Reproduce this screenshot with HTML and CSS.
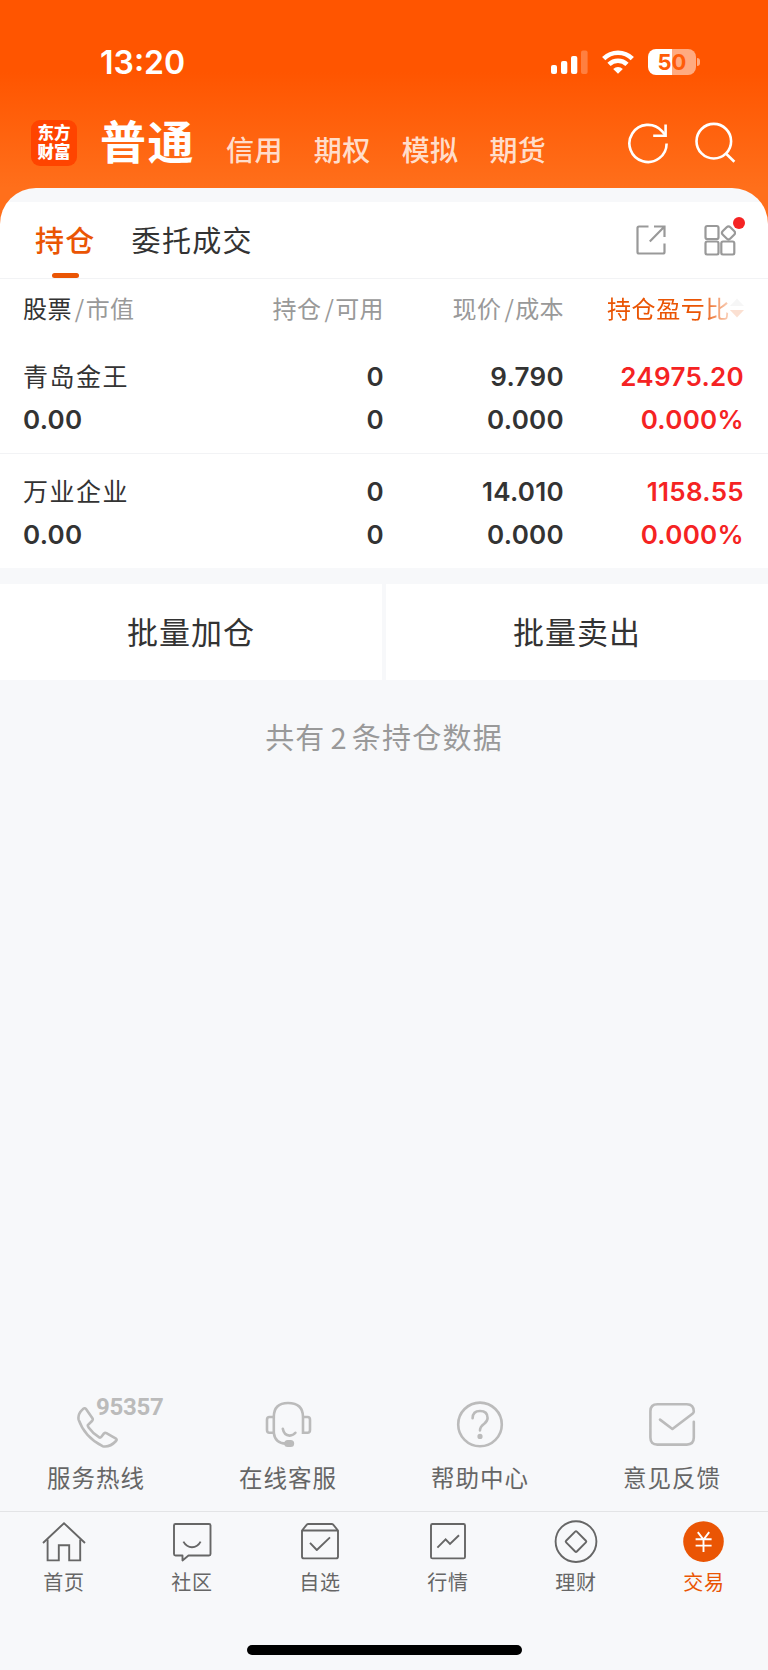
FILE: index.html
```
<!DOCTYPE html>
<html lang="zh-CN">

<head>
    <meta charset="UTF-8">
    <meta name="viewport" content="width=device-width, initial-scale=1.0">
    <title>普通交易 - 持仓</title>
    <link rel="stylesheet" href="styles.css">
</head>

<body>
    <header class="header">
        <div class="status-bar">
            <span class="clock">13:20</span>
            <div class="status-icons">
                <svg class="signal" width="37" height="24" viewBox="0 0 37 24" fill="#fff">
                    <rect x="0" y="15" width="6" height="9" rx="2" />
                    <rect x="10" y="11" width="6.3" height="13" rx="2" />
                    <rect x="20" y="6" width="6.3" height="18" rx="2" />
                    <rect x="30" y="0.5" width="6.6" height="23.5" rx="2" opacity="0.25" />
                </svg>
                <svg class="wifi" width="32" height="24" viewBox="0 0 32 24" fill="none" stroke="#fff" stroke-width="4.6">
                    <path d="M1.7 8.6 A20.3 20.3 0 0 1 30.3 8.6" />
                    <path d="M7 14.4 A12.8 12.8 0 0 1 25 14.4" />
                    <path d="M16 23.8 L11.2 18.9 A7 7 0 0 1 20.8 18.9 Z" fill="#fff" stroke="none" />
                </svg>
                <div class="battery"><span>50</span></div>
            </div>
        </div>
        <nav class="account-nav">
            <div class="logo"><span>东方</span><span>财富</span></div>
            <span class="account active">普通</span>
            <span class="account">信用</span>
            <span class="account">期权</span>
            <span class="account">模拟</span>
            <span class="account">期货</span>
            <svg class="refresh" width="42" height="42" viewBox="0 0 42 42" fill="none" stroke="#fff" stroke-width="2.6">
                <path d="M39.6 21.4 A18.6 18.6 0 1 1 35 9.2 L38.3 13" />
                <path d="M38.6 2.4 V13.8 H26.2" />
            </svg>
            <svg class="search" width="42" height="42" viewBox="0 0 42 42" fill="none" stroke="#fff" stroke-width="2.6">
                <circle cx="19.8" cy="19.2" r="17.3" />
                <path d="M31.6 31.2 L40.4 39.8" />
            </svg>
        </nav>
    </header>

    <main class="panel">
        <div class="tabs">
            <span class="tab active">持仓</span>
            <span class="tab">委托成交</span>
            <svg class="share" width="30" height="30" viewBox="0 0 30 30" fill="none" stroke="#999" stroke-width="2.2">
                <path d="M12.5 1.5 H3 Q1.5 1.5 1.5 3 V27 Q1.5 28.5 3 28.5 H27 Q28.5 28.5 28.5 27 V18.5" />
                <path d="M18 1.5 H28.5 V12 M28 2 L13.8 16.4" />
            </svg>
            <div class="more">
                <svg width="32" height="32" viewBox="0 0 32 32" fill="none" stroke="#999" stroke-width="2.2">
                    <rect x="1.5" y="2" width="13" height="13" rx="1.8" />
                    <rect x="1.5" y="17.5" width="13" height="13" rx="1.8" />
                    <rect x="17.3" y="17.5" width="13" height="13" rx="1.8" />
                    <rect x="19.2" y="3.6" width="10.6" height="10.6" rx="2.6" transform="rotate(45 24.5 8.9)" />
                </svg>
                <i class="dot"></i>
            </div>
        </div>

        <div class="row list-head">
            <span><b>股票</b><i>/</i>市值</span>
            <span>持仓<i>/</i>可用</span>
            <span>现价<i>/</i>成本</span>
            <span class="sort">持仓盈亏比<svg width="14" height="20" viewBox="0 0 14 20">
                    <path d="M0 8 L7 0.5 L14 8 Z" fill="#ccc" />
                    <path d="M0 12 L7 19.5 L14 12 Z" fill="#ea5504" />
                </svg></span>
        </div>

        <div class="row stock">
            <span class="name">青岛金王</span>
            <span>0</span>
            <span>9.790</span>
            <span class="up">24975.20</span>
            <span>0.00</span>
            <span>0</span>
            <span>0.000</span>
            <span class="up">0.000%</span>
        </div>
        <div class="row stock">
            <span class="name">万业企业</span>
            <span>0</span>
            <span>14.010</span>
            <span class="up">1158.55</span>
            <span>0.00</span>
            <span>0</span>
            <span>0.000</span>
            <span class="up">0.000%</span>
        </div>
    </main>

    <div class="batch">
        <div class="batch-btn">批量加仓</div>
        <div class="batch-btn">批量卖出</div>
    </div>
    <p class="summary">共有<span>2</span>条持仓数据</p>

    <section class="services">
        <div class="service">
            <svg width="48" height="48" viewBox="0 0 48 48" fill="none" stroke="#bbb" stroke-width="2.6" stroke-linejoin="round">
                <path d="M10.4 12.6 Q12.6 10.2 14.2 12.2 L20.6 21.4 Q21.2 22.8 20 24 L15.8 28.2 Q15.6 29.2 16.6 30.4 Q21 36.6 27.6 40.6 Q28.6 40.8 29.4 39.8 L32 36.4 Q33 35.4 34.4 36.2 L44 41.6 Q45.2 42.8 44 44 Q37.8 50.6 30.6 49.2 Q12.6 40 6.6 22.6 Q5.6 17 10.4 12.6 Z" transform="translate(0 -3)" />
            </svg>
            <span class="hotline">95357</span>
            <span class="label">服务热线</span>
        </div>
        <div class="service">
            <svg width="48" height="48" viewBox="0 0 48 48" fill="none" stroke="#bbb" stroke-width="2.6" stroke-linecap="round">
                <path d="M9.8 33 V17 Q9.8 3 24 3 Q39 3 39 17 V32.8 H43.5 Q46 32.8 46 30 V19.7 Q46 17 43.5 17 H39" />
                <path d="M9.8 17 H5.5 Q3 17 3 19.7 V30 Q3 32.8 5.5 32.8 H9.8 Q11 43.2 22 43.6" />
                <path d="M18.8 28.8 Q20 35.4 25.6 35.6 Q29.4 35.4 31.4 32.8" />
                <rect x="21.5" y="41.2" width="7.4" height="4.6" rx="2.3" fill="#bbb" />
            </svg>
            <span class="label">在线客服</span>
        </div>
        <div class="service">
            <svg width="48" height="48" viewBox="0 0 48 48" fill="none" stroke="#bbb" stroke-width="2.6" stroke-linecap="round">
                <circle cx="24" cy="24.4" r="21.8" />
                <path d="M16.6 18.2 Q16.8 11 24 11 Q31.6 11 31.6 18 Q31.6 21 28.2 23.8 Q23.9 27 24 30.4" />
                <circle cx="24" cy="36.4" r="1.3" fill="#bbb" />
            </svg>
            <span class="label">帮助中心</span>
        </div>
        <div class="service">
            <svg width="48" height="48" viewBox="0 0 48 48" fill="none" stroke="#bbb" stroke-width="2.6" stroke-linecap="round" stroke-linejoin="round">
                <path d="M45.8 21.8 V37.6 Q45.8 44.6 38.8 44.6 H9.4 Q2.4 44.6 2.4 37.6 V11.2 Q2.4 4.2 9.4 4.2 H38.8 Q45.8 4.2 45.8 11.6 Q45.8 12.6 44.8 13.4 L24.4 29 L12 19.6" />
            </svg>
            <span class="label">意见反馈</span>
        </div>
    </section>

    <nav class="tabbar">
        <a class="item">
            <svg width="44" height="44" viewBox="0 0 44 44" fill="none" stroke="#666" stroke-width="1.9">
                <path d="M1 23 L22 3.2 L43 23" />
                <path d="M5.6 19.5 V40.4 H16.8 V25.2 H27.2 V40.4 H38.2 V19.5" />
            </svg>
            <span>首页</span>
        </a>
        <a class="item">
            <svg width="44" height="44" viewBox="0 0 44 44" fill="none" stroke="#666" stroke-width="1.9" stroke-linejoin="round">
                <path d="M5.5 4 H39 Q40.5 4 40.5 5.5 V34 Q40.5 35.5 39 35.5 H18.5 L12.5 40.4 V35.5 H5.5 Q4 35.5 4 34 V5.5 Q4 4 5.5 4 Z" />
                <path d="M13.4 21.6 Q16.6 27.2 22 27.2 Q27.6 27.2 30.6 21.6" />
            </svg>
            <span>社区</span>
        </a>
        <a class="item">
            <svg width="44" height="44" viewBox="0 0 44 44" fill="none" stroke="#666" stroke-width="1.9" stroke-linejoin="round">
                <path d="M4 10.5 L8.8 4.7 Q9.4 4 10.4 4 H33.6 Q34.6 4 35.2 4.7 L40 10.5 V36.5 Q40 38.4 38 38.4 H6 Q4 38.4 4 36.5 Z M4 10.5 H40" />
                <path d="M12 22.8 L18.8 30 L32 17.4" />
            </svg>
            <span>自选</span>
        </a>
        <a class="item">
            <svg width="44" height="44" viewBox="0 0 44 44" fill="none" stroke="#666" stroke-width="1.9">
                <rect x="5" y="4" width="34" height="34.4" rx="1.5" />
                <path d="M11.4 27.6 L19.6 19.4 L24 24 L33 15.2" />
            </svg>
            <span>行情</span>
        </a>
        <a class="item">
            <svg width="44" height="44" viewBox="0 0 44 44" fill="none" stroke="#666" stroke-width="1.9">
                <circle cx="22" cy="21.6" r="20.4" />
                <rect x="14.4" y="14" width="15.2" height="15.2" rx="1.2" transform="rotate(45 22 21.6)" />
            </svg>
            <span>理财</span>
        </a>
        <a class="item active">
            <svg width="44" height="44" viewBox="0 0 44 44" fill="none" stroke="#fff" stroke-width="1.9">
                <circle cx="21.5" cy="21.6" r="20.3" fill="#ea5504" stroke="none" />
                <path d="M15.8 12.2 L21.5 19.6 L27.2 12.2 M21.5 19.4 V32 M13.6 19.2 H29.6 M13.6 25.6 H29.6" />
            </svg>
            <span>交易</span>
        </a>
    </nav>
    <div class="home-indicator"></div>
</body>

</html>
```
FILE: styles.css
```
* {
    box-sizing: border-box;
}

body {
    margin: 0;
    width: 768px;
    height: 1670px;
    display: flex;
    flex-direction: column;
    overflow: hidden;
    background: #f7f8fa;
    color: #333;
    font-family: Inter, "Noto Sans CJK SC", sans-serif;
}

svg {
    display: block;
    flex: none;
}

.header {
    flex: none;
    height: 232px;
    color: #fff;
    background: linear-gradient(#ff5500 0, #ff5500 72px, #ff6f1b 188px);
}

.status-bar {
    height: 110px;
    padding: 15px 72px 0 100px;
    display: flex;
    align-items: center;
    justify-content: space-between;
}

.clock {
    font-size: 32px;
    font-weight: 600;
    letter-spacing: 0;
}

.status-icons {
    display: flex;
    align-items: center;
    padding-bottom: 1px;
}

.wifi {
    margin: 0 14px;
}

.battery {
    position: relative;
    width: 48px;
    height: 26px;
    border-radius: 8px;
    background: linear-gradient(90deg, #fff 50%, rgba(255, 255, 255, 0.5) 50%);
    color: #ff5c08;
    font-size: 22px;
    font-weight: 700;
    line-height: 27px;
    text-align: center;
}

.battery::after {
    content: "";
    position: absolute;
    right: -4px;
    top: 9px;
    width: 3px;
    height: 8px;
    border-radius: 0 3px 3px 0;
    background: rgba(255, 255, 255, 0.5);
}

.account-nav {
    display: flex;
    align-items: flex-end;
    height: 60px;
    padding: 0 32px 5px 31px;
    font-family: "Noto Sans CJK SC", sans-serif;
}

.logo {
    width: 46px;
    height: 46px;
    margin-right: 23px;
    margin-bottom: -1px;
    padding-top: 3px;
    border-radius: 9px;
    background: #ff4400;
    font-size: 16.5px;
    font-weight: 900;
    line-height: 19px;
    text-align: center;
}

.logo span {
    display: block;
}

.account {
    margin-right: 31px;
    font-size: 28px;
    font-weight: 500;
    line-height: 32px;
    letter-spacing: 0.4px;
    color: rgba(255, 255, 255, 0.8);
}

.account.active {
    margin-right: 31px;
    font-size: 46px;
    font-weight: 700;
    line-height: 51px;
    letter-spacing: 1.5px;
    color: #fff;
}

.refresh {
    margin-left: auto;
    margin-right: 25px;
}

.refresh,
.search {
    margin-bottom: 1px;
}

.panel {
    flex: none;
    margin-top: -44px;
    height: 380px;
    border-radius: 36px 36px 0 0;
    background: linear-gradient(#f7f8fa 14px, #fff 14px);
    padding-top: 14px;
    font-family: "Noto Sans CJK SC", sans-serif;
}

.tabs {
    display: flex;
    align-items: center;
    height: 77px;
    padding: 0 32px 0 35px;
    border-bottom: 1px solid #f2f3f5;
}

.tab {
    position: relative;
    height: 76px;
    margin-right: 36px;
    font-size: 29px;
    line-height: 74px;
    letter-spacing: 1.3px;
}

.tab.active {
    color: #ea5504;
    font-weight: 500;
}

.tab.active::after {
    content: "";
    position: absolute;
    left: 17px;
    bottom: 0;
    width: 27px;
    height: 5px;
    border-radius: 3px;
    background: #ea5504;
}

.share {
    margin-left: auto;
    margin-right: 38px;
}

.more {
    position: relative;
}

.dot {
    position: absolute;
    right: -9px;
    top: -7px;
    width: 12px;
    height: 12px;
    border-radius: 50%;
    background: #f52323;
}

.row {
    display: grid;
    grid-template-columns: repeat(4, 180px);
    padding: 0 24px;
    text-align: right;
}

.row span:nth-child(4n + 1) {
    text-align: left;
    text-indent: -1px;
}

.list-head {
    height: 60px;
    line-height: 58px;
    font-size: 24px;
    letter-spacing: 0.4px;
    color: #999;
}

.list-head b {
    font-weight: 400;
    color: #333;
}

.list-head i {
    margin: 0 1px 0 3px;
    font-style: normal;
}

.sort {
    display: flex;
    align-items: center;
    justify-content: flex-end;
    height: 58px;
    letter-spacing: 0.6px;
    color: #ea5504;
    -webkit-mask-image: linear-gradient(90deg, #000 138px, rgba(0, 0, 0, 0.18) 168px);
    mask-image: linear-gradient(90deg, #000 138px, rgba(0, 0, 0, 0.18) 168px);
}

.stock {
    height: 114px;
    padding-top: 16px;
    grid-auto-rows: 43px;
    line-height: 44px;
    font-family: Inter, "Noto Sans CJK SC", sans-serif;
    font-size: 26px;
    font-weight: 580;
    letter-spacing: 0.3px;
}

.stock + .stock {
    border-top: 1px solid #f2f3f5;
}

.stock .name {
    font-size: 25px;
    font-weight: 400;
    letter-spacing: 1.5px;
}

.stock .up {
    color: #f52323;
}

.batch {
    flex: none;
    display: grid;
    grid-template-columns: 1fr 1fr;
    gap: 4px;
    margin-top: 16px;
}

.batch-btn {
    height: 96px;
    background: #fff;
    font-size: 31px;
    line-height: 98px;
    letter-spacing: 1px;
    text-align: center;
}

.summary {
    margin: 35px 0 0;
    font-family: "Noto Sans CJK SC", sans-serif;
    font-size: 29px;
    line-height: 43px;
    letter-spacing: 1.2px;
    text-align: center;
    color: #999;
}

.summary span {
    margin: 0 4px 0 5px;
}

.services {
    display: grid;
    grid-template-columns: repeat(4, 1fr);
    height: 111px;
    margin-top: auto;
    color: #666;
    font-size: 23.5px;
}

.service {
    position: relative;
    display: flex;
    flex-direction: column;
    align-items: center;
}

.service .label {
    line-height: 62px;
    letter-spacing: 1px;
}

.hotline {
    position: absolute;
    left: 96px;
    top: -5px;
    font-family: Roboto, sans-serif;
    font-size: 24px;
    font-weight: 700;
    line-height: 24px;
    letter-spacing: -0.3px;
    color: #bbb;
}

.tabbar {
    flex: none;
    display: grid;
    grid-template-columns: repeat(6, 1fr);
    height: 134px;
    border-top: 1px solid #e3e4e6;
    color: #666;
    font-size: 20px;
}

.item {
    display: flex;
    flex-direction: column;
    align-items: center;
    padding-top: 8px;
}

.item span {
    line-height: 38px;
    letter-spacing: 0.8px;
}

.item.active {
    color: #ea5504;
}

.home-indicator {
    flex: none;
    width: 275px;
    height: 10px;
    margin: 0 auto 15px;
    border-radius: 5px;
    background: #000;
}
```
